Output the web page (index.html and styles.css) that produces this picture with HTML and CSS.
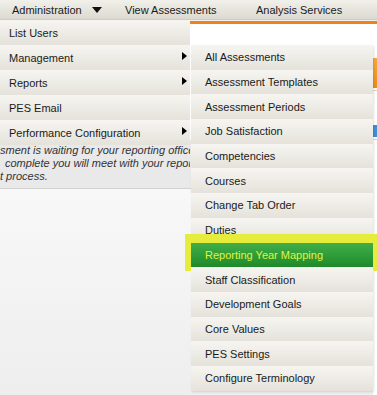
FILE: index.html
```html
<!DOCTYPE html>
<html lang="en">
<head>
    <meta charset="UTF-8">
    <meta name="viewport" content="width=device-width, initial-scale=1.0">
    <title>Administration Menu</title>
    <link rel="stylesheet" href="styles.css">
</head>
<body>

<div class="page">
    <nav class="topnav">
        <span class="nav-item nav-first">Administration
            <svg class="nav-caret" width="10" height="6" viewBox="0 0 10 6"><polygon points="0,0 10,0 5,6" fill="#111"/></svg>
        </span>
        <span class="nav-item">View Assessments</span>
        <span class="nav-item">Analysis Services</span>
    </nav>
    <div class="orange-rule"></div>

    <div class="content">
        <div class="main">
            <div class="blank"></div>
            <div class="notice">
                <div class="notice-text">
                    <div class="notice-line">sment is waiting for your reporting office</div>
                    <div class="notice-line indent">complete you will meet with your report</div>
                    <div class="notice-line">t process.</div>
                </div>
            </div>
            <div class="lower"></div>
        </div>
        <div class="side">
            <div class="side-btn"></div>
            <div class="side-rule"></div>
            <div class="side-blue"></div>
            <div class="side-rule"></div>
        </div>
    </div>

    <!-- first level dropdown -->
    <ul class="menu menu-admin">
        <li class="menu-item">List Users</li>
        <li class="menu-item has-sub">Management
            <svg class="sub-arrow" width="5" height="8" viewBox="0 0 5 8"><polygon points="0,0 5,4 0,8" fill="#000"/></svg>
        </li>
        <li class="menu-item has-sub">Reports
            <svg class="sub-arrow" width="5" height="8" viewBox="0 0 5 8"><polygon points="0,0 5,4 0,8" fill="#000"/></svg>
        </li>
        <li class="menu-item">PES Email</li>
        <li class="menu-item has-sub">Performance Configuration
            <svg class="sub-arrow" width="5" height="8" viewBox="0 0 5 8"><polygon points="0,0 5,4 0,8" fill="#000"/></svg>
        </li>
    </ul>

    <!-- management submenu -->
    <ul class="menu menu-sub">
        <li class="menu-item">All Assessments</li>
        <li class="menu-item">Assessment Templates</li>
        <li class="menu-item">Assessment Periods</li>
        <li class="menu-item">Job Satisfaction</li>
        <li class="menu-item">Competencies</li>
        <li class="menu-item">Courses</li>
        <li class="menu-item">Change Tab Order</li>
        <li class="menu-item">Duties</li>
        <li class="menu-item active">Reporting Year Mapping</li>
        <li class="menu-item">Staff Classification</li>
        <li class="menu-item">Development Goals</li>
        <li class="menu-item">Core Values</li>
        <li class="menu-item">PES Settings</li>
        <li class="menu-item">Configure Terminology</li>
    </ul>
</div>

</body>
</html>
```

FILE: styles.css
```css
body {
    margin: 0;
    font-family: "Liberation Sans", Arial, sans-serif;
    font-size: 11px;
    color: #1a1a1a;
    background-color: #f0f0f0;
}
.page {
    position: relative;
    width: 377px;
    height: 395px;
    overflow: hidden;
    display: flex;
    flex-direction: column;
}
.topnav {
    display: grid;
    grid-template-columns: 125px 131px auto;
    align-items: center;
    height: 19px;
    background: linear-gradient(#f1f0ea, #dcdad0);
    border-bottom: 1px solid #cfcdc2;
}
.nav-item {
    display: flex;
    align-items: center;
    white-space: nowrap;
}
.nav-first {
    padding-left: 12px;
}
.nav-caret {
    margin-left: 10px;
}
.orange-rule {
    height: 3px;
    margin-top: 1px;
    background-color: #f0821e;
}
.content {
    flex: 1;
    display: flex;
    background: #fff;
}
.main {
    flex: 1;
    display: flex;
    flex-direction: column;
}
.blank {
    height: 116px;
    background: #fff;
}
.notice {
    background-color: #e9e9e9;
    padding: 4px 0 5px 0;
    border-bottom: 1px solid #d2d2d2;
    font-style: italic;
    color: #333;
    line-height: 13px;
    white-space: nowrap;
}
.notice-text {
    width: 190px;
    overflow: hidden;
}
.notice-line.indent {
    padding-left: 5px;
}
.lower {
    flex: 1;
    background: linear-gradient(#f8f8f8, #eeeeee);
}
.side {
    width: 4px;
    display: flex;
    flex-direction: column;
    background: #fff;
}
.side-btn {
    height: 30px;
    margin-top: 34px;
    background: linear-gradient(#f7a93c, #ee8a1a);
}
.side-rule {
    height: 1px;
    margin-top: 2px;
    background: #f3cfae;
}
.side-blue {
    height: 12px;
    margin-top: 34px;
    background: #3d8fd8;
}

/* dropdown menus */
.menu {
    position: absolute;
    margin: 0;
    padding: 0;
    list-style: none;
}
.menu-admin {
    top: 20px;
    left: 0;
    width: 190px;
    z-index: 2;
}
.menu-sub {
    top: 45px;
    left: 191px;
    width: 182px;
    z-index: 3;
    box-shadow: 1px 1px 2px rgba(0, 0, 0, 0.12);
}
.menu-item {
    position: relative;
    display: flex;
    align-items: center;
    height: 25px;
    padding-left: 9px;
    background: linear-gradient(#f6f5f1, #e4e2da);
    white-space: nowrap;
}
.menu-sub .menu-item {
    height: 24.7px;
    padding-left: 14px;
}
.sub-arrow {
    position: absolute;
    left: 182px;
    top: 7px;
}
.menu-item.active {
    background: linear-gradient(#42ad49, #2b9a36 60%, #1f882b);
    color: #e2f23e;
}
.menu-item.active::before {
    content: "";
    position: absolute;
    top: -9px;
    left: -6px;
    right: -4px;
    bottom: -4px;
    border-style: solid;
    border-color: #e6ec3c;
    border-width: 9px 4px 4px 6px;
}
```
